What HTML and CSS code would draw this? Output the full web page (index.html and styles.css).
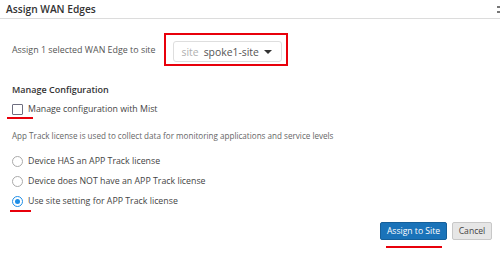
FILE: index.html
```html
<!DOCTYPE html>
<html lang="en">
<head>
    <meta charset="UTF-8">
    <title>Assign WAN Edges</title>
    <link rel="stylesheet" href="styles.css">
</head>
<body>
    <div class="modal-header">
        <div class="modal-title">Assign WAN Edges</div>
        <svg class="modal-close" width="4" height="12" viewBox="0 0 4 12">
            <rect x="1" y="3" width="3" height="2" fill="#777"/>
            <rect x="1" y="8" width="3" height="2" fill="#777"/>
        </svg>
    </div>

    <div class="modal-body">
        <div class="site-row">
            <div class="site-label">Assign 1 selected WAN Edge to site</div>
            <div class="highlight-box">
                <div class="site-select">
                    <span class="select-prefix">site</span>
                    <span class="select-value">spoke1-site</span>
                    <span class="caret"></span>
                </div>
            </div>
        </div>

        <div class="section-title">Manage Configuration</div>

        <label class="check-row">
            <span class="checkbox"></span>
            <span>Manage configuration with Mist</span>
        </label>
        <div class="mark mark-check"></div>

        <div class="help-text">App Track license is used to collect data for monitoring applications and service levels</div>

        <div class="radio-list">
            <label class="radio-row">
                <span class="radio"></span>
                <span>Device HAS an APP Track license</span>
            </label>
            <label class="radio-row">
                <span class="radio"></span>
                <span>Device does NOT have an APP Track license</span>
            </label>
            <label class="radio-row">
                <span class="radio checked"></span>
                <span>Use site setting for APP Track license</span>
            </label>
        </div>
        <div class="mark mark-radio"></div>
    </div>

    <div class="modal-footer">
        <div class="btn-wrap">
            <button class="btn btn-primary">Assign to Site</button>
            <div class="mark mark-btn"></div>
        </div>
        <button class="btn btn-default">Cancel</button>
    </div>
</body>
</html>
```

FILE: styles.css
```css
body {
    margin: 0;
    width: 500px;
    height: 253px;
    overflow: hidden;
    background: #fff;
    font-family: 'Open Sans', sans-serif;
    color: #444;
}

.modal-header {
    display: flex;
    justify-content: space-between;
    align-items: center;
    height: 19px;
    border-bottom: 1px solid #dcdcdc;
    padding-left: 6px;
    box-sizing: border-box;
}

.modal-title {
    font-size: 10.2px;
    font-weight: 600;
    color: #333;
}

.modal-close {
    display: block;
}

.modal-body {
    padding: 0 12px;
}

.site-row {
    display: flex;
    align-items: center;
    gap: 8px;
    margin-top: 14px;
}

.site-label {
    font-size: 8.9px;
    color: #555;
}

.highlight-box {
    border: 2px solid #e8000b;
    padding: 6px 4px 2px 7px;
    width: 124px;
    box-sizing: border-box;
}

.site-select {
    display: flex;
    align-items: center;
    height: 21px;
    border: 1px solid #dedede;
    border-radius: 3px;
    padding: 0 9px 0 8px;
    box-sizing: border-box;
    font-size: 10.4px;
}

.select-prefix {
    color: #b0b0b0;
    margin-right: 5px;
}

.select-value {
    color: #555;
    flex: 1;
}

.caret {
    width: 0;
    height: 0;
    border-left: 4px solid transparent;
    border-right: 4px solid transparent;
    border-top: 4px solid #333;
}

.section-title {
    font-size: 9px;
    font-weight: 600;
    color: #333;
    margin-top: 17px;
}

.check-row,
.radio-row {
    display: flex;
    align-items: center;
    gap: 5px;
    font-size: 8.8px;
    color: #444;
}

.check-row {
    margin-top: 7px;
}

.checkbox {
    width: 9px;
    height: 9px;
    border: 1px solid #6e6e80;
    border-radius: 1px;
}

.mark {
    height: 2px;
    background: #e8000b;
}

.mark-check {
    width: 26px;
    margin: 2px 0 0 -5px;
}

.help-text {
    font-size: 8.1px;
    color: #666;
    margin-top: 11px;
}

.radio-list {
    display: flex;
    flex-direction: column;
    gap: 8px;
    margin-top: 14px;
}

.radio {
    width: 9px;
    height: 9px;
    border: 1px solid #aaa;
    border-radius: 50%;
    box-sizing: content-box;
    position: relative;
}

.radio.checked {
    border-color: #1f8ee6;
}

.radio.checked::after {
    content: '';
    position: absolute;
    left: 2px;
    top: 2px;
    width: 5px;
    height: 5px;
    border-radius: 50%;
    background: #1f8ee6;
}

.mark-radio {
    width: 21px;
    margin: 3px 0 0 -2px;
}

.modal-footer {
    display: flex;
    justify-content: flex-end;
    gap: 5px;
    padding-right: 8px;
    margin-top: 10px;
}

.btn-wrap {
    display: flex;
    flex-direction: column;
    align-items: center;
}

.btn {
    height: 18px;
    font-family: 'Open Sans', sans-serif;
    font-size: 8.6px;
    border-radius: 2px;
    padding: 0;
    white-space: nowrap;
}

.btn-primary {
    background: #1a73b9;
    border: 1px solid #155f99;
    color: #fff;
    width: 67px;
}

.btn-default {
    background: #e6e6e6;
    border: 1px solid #c8c8c8;
    color: #444;
    width: 40px;
}

.mark-btn {
    width: 56px;
    margin-top: 6px;
}
```
